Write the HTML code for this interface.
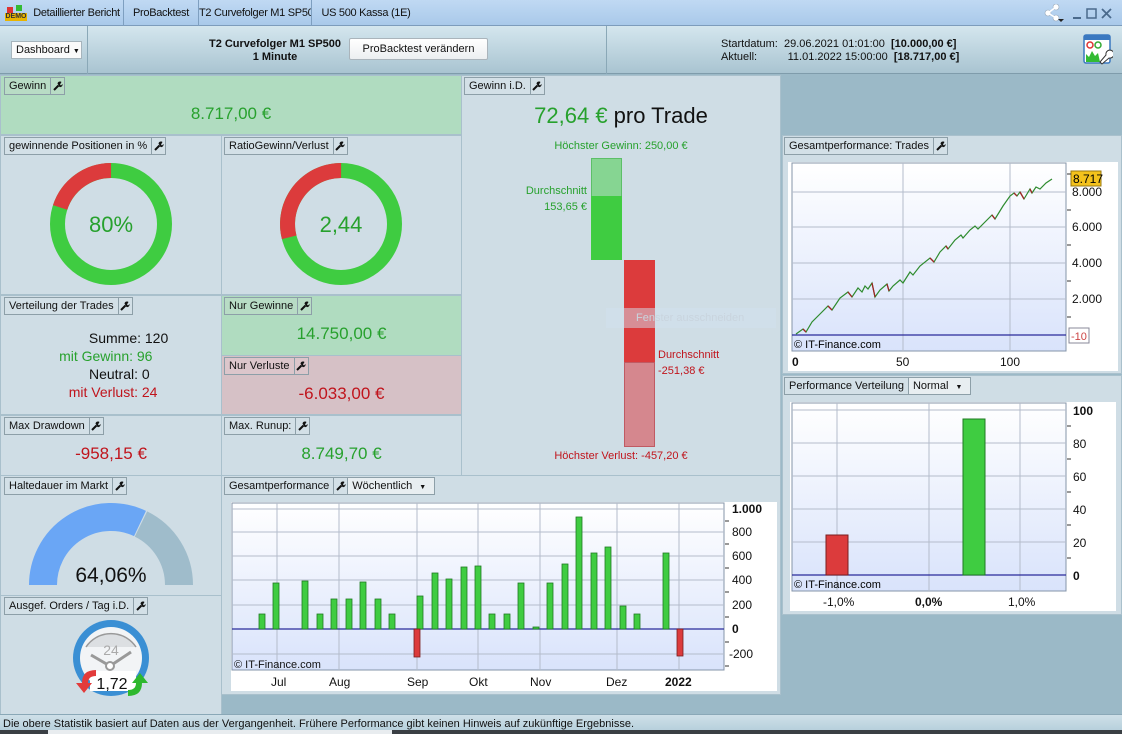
<!DOCTYPE html>
<html><head><meta charset="utf-8">
<style>
*{margin:0;padding:0;box-sizing:border-box}
body{width:1122px;height:734px;overflow:hidden;position:relative;background:#9bb9c7;font-family:"Liberation Sans",Arial,sans-serif;font-size:11px;color:#111}
.a{position:absolute}
.p{position:absolute;background:#cfdde5;border:1px solid #a9c0cc}
.g{background:#b0dcc0}
.r{background:#d6c1c6}
.lb{position:absolute;height:18px;border:1px solid #8d9fa8;background:#d3e0e7;display:flex;font-size:11px;line-height:16px;white-space:nowrap}
.lb span{padding:0 4px}
.lb i{width:14px;border-left:1px solid #8d9fa8;display:flex;align-items:center;justify-content:center}
.lb.gg{background:#b8dcc5}.lb.rr{background:#dcc6cb}
.big{position:absolute;font-size:17px;text-align:center}
.grn{color:#27a12d}.red{color:#c0141c}
.tab{position:absolute;top:0;height:26px;line-height:26px;font-size:11px;letter-spacing:-0.3px;white-space:nowrap;overflow:hidden;text-align:center;border-right:1px solid #7e9fc0}
</style></head><body>
<svg width="0" height="0" style="position:absolute"><defs><symbol id="w" viewBox="0 0 10 10"><path d="M1 9L5.5 4.5" stroke="#111" stroke-width="2"/><path d="M4.5 2.5A2.5 2.5 0 0 1 8.5 1L7 3.5 8 4.5 9.5 3A2.5 2.5 0 0 1 6.5 6z" fill="#111"/></symbol></defs></svg>
<!-- title bar -->
<div class="a" style="left:0;top:0;width:1122px;height:26px;background:linear-gradient(#c0d9f3,#a9c9ea);border-bottom:1px solid #7d9cbc"></div>
<div class="a" style="left:5px;top:7px;width:22px;height:14px">
<div class="a" style="left:2px;top:0;width:6px;height:6px;background:#d33"></div><div class="a" style="left:11px;top:-2px;width:6px;height:6px;background:#3b3"></div>
<div class="a" style="left:0;top:6px;width:22px;height:8px;background:#e8b400;font-size:7px;line-height:8px;font-weight:bold;color:#333;text-align:center">DEMO</div></div>
<div class="tab" style="left:30px;width:94px">Detaillierter Bericht</div>
<div class="tab" style="left:124px;width:75px">ProBacktest</div>
<div class="tab" style="left:199px;width:113px">T2 Curvefolger M1 SP500</div>
<div class="tab" style="left:312px;width:108px;border-right:none">US 500 Kassa (1E)</div>
<svg class="a" style="left:1043px;top:4px" width="78" height="18"><g fill="#fff" stroke="#9ab" stroke-width=".6"><circle cx="5" cy="9" r="3"/><circle cx="13" cy="3" r="3"/><circle cx="13" cy="14" r="3"/></g><path d="M5 9L13 3M5 9L13 14" stroke="#fff" stroke-width="1.5"/><path d="M15 15h6l-3 3z" fill="#222"/><path d="M30 14h8" stroke="#4a6a8c" stroke-width="2"/><rect x="44" y="5" width="9" height="9" fill="none" stroke="#4a6a8c" stroke-width="1.5"/><path d="M59 5l9 9M68 5l-9 9" stroke="#4a6a8c" stroke-width="1.8"/></svg>
<!-- toolbar -->
<div class="a" style="left:0;top:26px;width:1122px;height:48px;background:linear-gradient(#d4e6ee,#a9c4d1);border-bottom:1px solid #7f9cab"></div>
<div class="a" style="left:87px;top:26px;width:1px;height:48px;background:#8aa8b7"></div>
<div class="a" style="left:606px;top:26px;width:1px;height:48px;background:#8aa8b7"></div>
<div class="a" style="left:11px;top:41px;width:71px;height:18px;background:#fafafa;border:1px solid #a6b4bc;font-size:11px;line-height:16px;padding-left:4px;white-space:nowrap">Dashboard <span style="font-size:7px">▼</span></div>
<div class="a" style="left:180px;top:38px;width:190px;text-align:center;font-weight:bold;font-size:11px;line-height:13px">T2 Curvefolger M1 SP500<br>1 Minute</div>
<div class="a" style="left:349px;top:38px;width:139px;height:22px;background:linear-gradient(#fff,#eceff1);border:1px solid #aab4bb;border-radius:2px;text-align:center;line-height:20px;font-size:11px">ProBacktest verändern</div>
<div class="a" style="left:721px;top:38px;font-size:11px;line-height:13px;white-space:pre">Startdatum:  29.06.2021 01:01:00  <b>[10.000,00 €]</b>
Aktuell:          11.01.2022 15:00:00  <b>[18.717,00 €]</b></div>
<svg class="a" style="left:1083px;top:34px" width="30" height="32"><rect x="1" y="1" width="26" height="28" rx="2" fill="#fff" stroke="#3a78c0" stroke-width="1.5"/><rect x="1" y="1" width="26" height="5" fill="#3a78c0"/><circle cx="7" cy="11" r="3" fill="none" stroke="#d33" stroke-width="1.5"/><circle cx="15" cy="11" r="3" fill="none" stroke="#3a3" stroke-width="1.5"/><path d="M3 28V20l3 3 3-6 3 5 3-3 2 9z" fill="#3b3"/><path d="M17 28l6-7a4 4 0 1 1 3 3l-7 6z" fill="#fff" stroke="#333"/></svg>

<!-- panels -->
<div class="p g" style="left:0;top:75px;width:462px;height:60px"></div>
<div class="lb gg" style="left:4px;top:77px"><span>Gewinn</span><i><svg width="10" height="10"><use href="#w"/></svg></i></div>
<div class="big grn" style="left:0;top:104px;width:462px">8.717,00 €</div>

<div class="p" style="left:461px;top:75px;width:320px;height:401px"></div>
<div class="lb" style="left:464px;top:77px"><span>Gewinn i.D.</span><i><svg width="10" height="10"><use href="#w"/></svg></i></div>
<div class="a" style="left:461px;top:103px;width:320px;text-align:center;font-size:22px"><span class="grn">72,64 €</span> pro Trade</div>
<div class="a grn" style="left:461px;top:140px;width:320px;text-align:center">Höchster Gewinn: 250,00 €</div>
<div class="a" style="left:591px;top:158px;width:31px;height:39px;background:#86d592;border:1px solid #5cbf68"></div>
<div class="a" style="left:591px;top:196px;width:31px;height:64px;background:#3fcc41"></div>
<div class="a grn" style="left:510px;top:183px;width:77px;text-align:right;line-height:16px">Durchschnitt<br>153,65 €</div>
<div class="a" style="left:624px;top:260px;width:31px;height:103px;background:#dc3b3c"></div>
<div class="a" style="left:624px;top:362px;width:31px;height:85px;background:#d5878e;border:1px solid #c05a63"></div>
<div class="a red" style="left:658px;top:347px;line-height:16px">Durchschnitt<br>-251,38 €</div>
<div class="a red" style="left:461px;top:450px;width:320px;text-align:center">Höchster Verlust: -457,20 €</div>
<div class="a" style="left:606px;top:308px;width:170px;height:20px;background:rgba(210,225,240,.5);color:#c9d4de;font-size:11px;line-height:20px;padding-left:30px">Fenster ausschneiden</div>

<div class="p" style="left:0;top:135px;width:222px;height:160px"></div>
<div class="lb" style="left:4px;top:137px"><span>gewinnende Positionen in %</span><i><svg width="10" height="10"><use href="#w"/></svg></i></div>
<div class="p" style="left:221px;top:135px;width:241px;height:160px"></div>
<div class="lb" style="left:224px;top:137px"><span>RatioGewinn/Verlust</span><i><svg width="10" height="10"><use href="#w"/></svg></i></div>
<svg class="a" style="left:0;top:135px" width="462" height="160">
<circle cx="111" cy="89" r="53.5" fill="none" stroke="#3fcc41" stroke-width="15"/>
<circle cx="111" cy="89" r="53.5" fill="none" stroke="#dc3b3c" stroke-width="15" stroke-dasharray="67.2 400" transform="rotate(-162 111 89)"/>
<circle cx="341" cy="89" r="53.5" fill="none" stroke="#3fcc41" stroke-width="15"/>
<circle cx="341" cy="89" r="53.5" fill="none" stroke="#dc3b3c" stroke-width="15" stroke-dasharray="97.5 400" transform="rotate(-194.4 341 89)"/>
<text x="111" y="97" text-anchor="middle" font-size="22" fill="#27a12d" font-family="Liberation Sans">80%</text>
<text x="341" y="97" text-anchor="middle" font-size="22" fill="#27a12d" font-family="Liberation Sans">2,44</text>
</svg>

<div class="p" style="left:0;top:295px;width:222px;height:120px"></div>
<div class="lb" style="left:4px;top:297px"><span>Verteilung der Trades</span><i><svg width="10" height="10"><use href="#w"/></svg></i></div>
<div class="a" style="left:0;top:329px;width:222px;font-size:14px;line-height:18px">
<div style="display:flex"><div style="width:141px;text-align:right">Summe:</div><div>&nbsp;120</div></div>
<div style="display:flex" class="grn"><div style="width:133px;text-align:right">mit Gewinn:</div><div>&nbsp;96</div></div>
<div style="display:flex"><div style="width:138px;text-align:right">Neutral:</div><div>&nbsp;0</div></div>
<div style="display:flex" class="red"><div style="width:138px;text-align:right">mit Verlust:</div><div>&nbsp;24</div></div></div>

<div class="p g" style="left:221px;top:295px;width:241px;height:61px"></div>
<div class="lb gg" style="left:224px;top:297px"><span>Nur Gewinne</span><i><svg width="10" height="10"><use href="#w"/></svg></i></div>
<div class="big grn" style="left:221px;top:324px;width:241px">14.750,00 €</div>
<div class="p r" style="left:221px;top:355px;width:241px;height:60px"></div>
<div class="lb rr" style="left:224px;top:357px"><span>Nur Verluste</span><i><svg width="10" height="10"><use href="#w"/></svg></i></div>
<div class="big red" style="left:221px;top:384px;width:241px">-6.033,00 €</div>

<div class="p" style="left:0;top:415px;width:222px;height:61px"></div>
<div class="lb" style="left:4px;top:417px"><span>Max Drawdown</span><i><svg width="10" height="10"><use href="#w"/></svg></i></div>
<div class="big red" style="left:0;top:444px;width:222px">-958,15 €</div>
<div class="p" style="left:221px;top:415px;width:241px;height:61px"></div>
<div class="lb" style="left:224px;top:417px"><span>Max. Runup:</span><i><svg width="10" height="10"><use href="#w"/></svg></i></div>
<div class="big grn" style="left:221px;top:444px;width:241px">8.749,70 €</div>

<div class="p" style="left:0;top:475px;width:222px;height:121px"></div>
<div class="lb" style="left:4px;top:477px"><span>Haltedauer im Markt</span><i><svg width="10" height="10"><use href="#w"/></svg></i></div>
<svg class="a" style="left:0;top:475px" width="222" height="120">
<path d="M43 110A68 68 0 0 1 140 48.5" fill="none" stroke="#6aa6f5" stroke-width="28"/>
<path d="M141 49A68 68 0 0 1 179 110" fill="none" stroke="#9fbccb" stroke-width="28"/>
<text x="111" y="107" text-anchor="middle" font-size="21" font-family="Liberation Sans" fill="#111">64,06%</text></svg>

<div class="p" style="left:0;top:595px;width:222px;height:120px"></div>
<div class="lb" style="left:4px;top:597px"><span>Ausgef. Orders / Tag i.D.</span><i><svg width="10" height="10"><use href="#w"/></svg></i></div>
<svg class="a" style="left:0;top:595px" width="222" height="120">
<circle cx="111" cy="63" r="38" fill="#3a8fd4"/><circle cx="111" cy="63" r="31" fill="#f2f4f6"/>
<path d="M86 52A30 30 0 0 1 136 52" fill="#dcdfe2" stroke="#999" stroke-width="1.5"/>
<text x="111" y="60" text-anchor="middle" font-size="14" fill="#aaa" font-family="Liberation Sans">24</text>
<path d="M91 60L110 71L131 57" stroke="#999" stroke-width="3" fill="none"/><circle cx="110" cy="71" r="4" fill="#fff" stroke="#999" stroke-width="2"/>
<rect x="90" y="76" width="46" height="20" fill="#fff"/>
<text x="112" y="94" text-anchor="middle" font-size="16" font-family="Liberation Sans" fill="#111">1,72</text>
<path d="M96 75Q82 75 82 88H76l8 10 8-10H88Q88 81 96 81z" fill="#e23b3b"/>
<path d="M128 101Q142 101 142 88H148L140 78 132 88H136Q136 95 128 95z" fill="#2eb82e"/>
</svg>

<div class="p" style="left:221px;top:475px;width:560px;height:220px"></div>
<div class="lb" style="left:224px;top:477px"><span>Gesamtperformance</span><i><svg width="10" height="10"><use href="#w"/></svg></i><span style="border-left:1px solid #8d9fa8;background:#e8eef1">Wöchentlich <span style="font-size:7px">▼</span></span></div>
<svg class="a" style="left:231px;top:502px" width="546" height="189" font-family="Liberation Sans">
<defs><linearGradient id="bg1" x1="0" y1="0" x2="0" y2="1"><stop offset="0" stop-color="#fff"/><stop offset="1" stop-color="#d9e3fb"/></linearGradient></defs>
<rect width="546" height="189" fill="#fff"/>
<rect x="1" y="1" width="492" height="167" fill="url(#bg1)" stroke="#8595a8"/>
<g stroke="#b4bccb" stroke-width="1">
<path d="M46 1V168M108 1V168M186 1V168M247 1V168M309 1V168M386 1V168M448 1V168"/>
<path d="M1 7H493M1 30H493M1 54H493M1 78H493M1 103H493M1 152H493"/></g>
<path d="M1 127H493" stroke="#2a2a9a" stroke-width="1.2"/>
<g fill="#3fcc41" stroke="#1f7a22" stroke-width=".8">
<rect x="28" y="112" width="6" height="15"/><rect x="42" y="81" width="6" height="46"/><rect x="71" y="79" width="6" height="48"/><rect x="86" y="112" width="6" height="15"/><rect x="100" y="97" width="6" height="30"/><rect x="115" y="97" width="6" height="30"/><rect x="129" y="80" width="6" height="47"/><rect x="144" y="97" width="6" height="30"/><rect x="158" y="112" width="6" height="15"/><rect x="186" y="94" width="6" height="33"/><rect x="201" y="71" width="6" height="56"/><rect x="215" y="77" width="6" height="50"/><rect x="230" y="65" width="6" height="62"/><rect x="244" y="64" width="6" height="63"/><rect x="258" y="112" width="6" height="15"/><rect x="273" y="112" width="6" height="15"/><rect x="287" y="81" width="6" height="46"/><rect x="302" y="125" width="6" height="2"/><rect x="316" y="81" width="6" height="46"/><rect x="331" y="62" width="6" height="65"/><rect x="345" y="15" width="6" height="112"/><rect x="360" y="51" width="6" height="76"/><rect x="374" y="45" width="6" height="82"/><rect x="389" y="104" width="6" height="23"/><rect x="403" y="112" width="6" height="15"/><rect x="432" y="51" width="6" height="76"/></g>
<g fill="#dc3b3c" stroke="#7a1f1f" stroke-width=".8"><rect x="183" y="127" width="6" height="28"/><rect x="446" y="127" width="6" height="27"/></g>
<g font-size="12" fill="#111"><text x="501" y="11" font-weight="bold">1.000</text><text x="501" y="34">800</text><text x="501" y="58">600</text><text x="501" y="82">400</text><text x="501" y="107">200</text><text x="501" y="131" font-weight="bold">0</text><text x="498" y="156">-200</text>
<text x="40" y="184">Jul</text><text x="98" y="184">Aug</text><text x="176" y="184">Sep</text><text x="238" y="184">Okt</text><text x="299" y="184">Nov</text><text x="375" y="184">Dez</text><text x="434" y="184" font-weight="bold">2022</text></g>
<text x="3" y="166" font-size="11" fill="#111">© IT-Finance.com</text>
<g stroke="#333"><path d="M494 19h4M494 42h4M494 66h4M494 90h4M494 115h4M494 140h4M494 164h4"/></g>
</svg>

<!-- right column -->
<div class="p" style="left:782px;top:135px;width:340px;height:239px"></div>
<div class="lb" style="left:784px;top:137px"><span>Gesamtperformance: Trades</span><i><svg width="10" height="10"><use href="#w"/></svg></i></div>
<svg class="a" style="left:788px;top:162px" width="330" height="209" font-family="Liberation Sans">
<defs><linearGradient id="bg2" x1="0" y1="0" x2="0" y2="1"><stop offset="0" stop-color="#fff"/><stop offset="1" stop-color="#d9e3fb"/></linearGradient></defs>
<rect width="330" height="209" fill="#fff"/>
<rect x="4" y="1" width="274" height="188" fill="url(#bg2)" stroke="#8595a8"/>
<g stroke="#b4bccb"><path d="M115 1V189M222 1V189M4 30H278M4 65H278M4 101H278M4 137H278"/></g>
<path d="M4 173H278" stroke="#2a2a9a" stroke-width="1.2"/>
<polyline fill="none" stroke="#2e8b2e" stroke-width="1.2" points="8,172 15,167 18,170 24,160 32,152 40,144 44,148 52,136 60,130 64,135 70,126 74,130 77,124 80,127 84,121 87,135 92,128 99,122 101,129 105,124 112,118 115,121 122,110 125,113 132,104 142,96 146,100 152,90 158,84 160,87 167,78 173,73 175,76 182,68 187,64 190,67 197,60 204,53 207,57 215,44 222,34 226,31 229,34 232,30 236,37 242,27 244,31 248,25 252,27 258,21 264,17"/>
<g stroke="#a02525" stroke-width="1.3" fill="none"><path d="M15 167L18 170M40 144L44 148M60 130L64 135M84 121L87 135M99 122L101 129M142 96L146 100M158 84L160 87M204 53L207 57M226 31L229 34M232 30L236 37M242 27L244 31"/></g>
<rect x="283" y="9" width="30" height="15" fill="#f4c21c" stroke="#9a7a10"/><text x="285" y="21" font-size="12">8.717</text>
<g font-size="12" fill="#111"><text x="284" y="34">8.000</text><text x="284" y="69">6.000</text><text x="284" y="105">4.000</text><text x="284" y="141">2.000</text>
<text x="4" y="204" font-weight="bold">0</text><text x="108" y="204">50</text><text x="212" y="204">100</text></g>
<rect x="281" y="166" width="20" height="15" fill="#fff" stroke="#889"/><text x="283" y="178" font-size="11" fill="#c44">-10</text>
<text x="6" y="186" font-size="11">© IT-Finance.com</text>
<g stroke="#333"><path d="M279 12h4M279 48h4M279 83h4M279 119h4M279 155h4"/></g>
</svg>

<div class="p" style="left:782px;top:375px;width:340px;height:240px"></div>
<div class="lb" style="left:784px;top:377px"><span>Performance Verteilung</span><span style="border-left:1px solid #8d9fa8;background:#e8eef1">Normal <span style="font-size:7px">▼</span></span></div>
<svg class="a" style="left:790px;top:402px" width="326" height="209" font-family="Liberation Sans">
<rect width="326" height="209" fill="#fff"/>
<rect x="2" y="1" width="274" height="188" fill="url(#bg2)" stroke="#8595a8"/>
<g stroke="#b4bccb"><path d="M47 1V189M139 1V189M230 1V189M2 8H276M2 41H276M2 74H276M2 107H276M2 140H276"/></g>
<path d="M2 173H276" stroke="#2a2a9a" stroke-width="1.2"/>
<rect x="36" y="133" width="22" height="40" fill="#dc3b3c" stroke="#7a1f1f"/>
<rect x="173" y="17" width="22" height="156" fill="#3fcc41" stroke="#1f7a22"/>
<g font-size="12" fill="#111"><text x="283" y="13" font-weight="bold">100</text><text x="283" y="46">80</text><text x="283" y="79">60</text><text x="283" y="112">40</text><text x="283" y="145">20</text><text x="283" y="178" font-weight="bold">0</text>
<text x="33" y="204">-1,0%</text><text x="125" y="204" font-weight="bold">0,0%</text><text x="218" y="204">1,0%</text></g>
<g stroke="#333"><path d="M277 24h4M277 57h4M277 90h4M277 123h4M277 156h4"/></g>
<text x="4" y="186" font-size="11">© IT-Finance.com</text>
</svg>

<!-- footer -->
<div class="a" style="left:0;top:714px;width:1122px;height:16px;background:linear-gradient(#cfe0e8,#b7d0dc);border-top:1px solid #8aa8b7;font-size:11px;line-height:18px;padding-left:3px;overflow:hidden;white-space:nowrap">Die obere Statistik basiert auf Daten aus der Vergangenheit. Frühere Performance gibt keinen Hinweis auf zukünftige Ergebnisse.</div>
<div class="a" style="left:0;top:730px;width:1122px;height:4px;background:#3a3f44"></div>
<div class="a" style="left:48px;top:730px;width:344px;height:4px;background:#e8ecef"></div>
</body></html>
